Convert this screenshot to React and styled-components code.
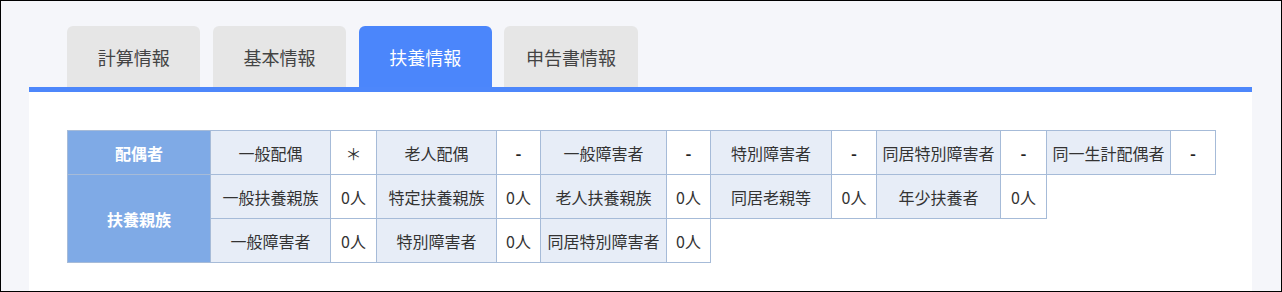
import styled, { createGlobalStyle } from "styled-components";

const GlobalStyle = createGlobalStyle`
	html, body {
		margin: 0;
		padding: 0;
	}
	body {
		font-family: "Noto Sans CJK JP", "Noto Sans", sans-serif;
		background: #f5f6fa;
	}
`;

const Frame = styled.div`
	box-sizing: border-box;
	width: 1282px;
	height: 292px;
	border: 1px solid #000;
	background: #f5f6fa;
	padding: 25px 29px 0 28px;
	display: flex;
	flex-direction: column;
`;

const TabBar = styled.div`
	display: flex;
	gap: 12.4px;
	padding-left: 38px;
`;

const Tab = styled.div`
	width: 133.4px;
	height: 61px;
	display: flex;
	align-items: center;
	justify-content: center;
	border-radius: 6px 6px 0 0;
	font-size: 18px;
	color: ${(p) => (p.$active ? "#ffffff" : "#444444")};
	background: ${(p) => (p.$active ? "#4b86fb" : "#e6e6e6")};
	cursor: pointer;
	user-select: none;
`;

const Panel = styled.div`
	flex: 1;
	background: #ffffff;
	border-top: 5px solid #4d87fb;
	padding: 38px 0 0 38px;
`;

const Table = styled.table`
	border-collapse: collapse;
	table-layout: fixed;
	width: 1148px;
	font-size: 16px;
`;

const HeadCell = styled.th`
	height: 43px;
	padding: 0;
	background: #7faae6;
	color: #ffffff;
	font-weight: 700;
	font-size: 16px;
	text-align: center;
	border: 1px solid #a6bbd8;
	border-top-color: ${(p) => (p.$lower ? "#c8daf3" : "#a6bbd8")};
`;

const LabelCell = styled.td`
	height: 43px;
	padding: 0;
	background: #e7edf7;
	color: #333333;
	text-align: center;
	white-space: nowrap;
	border: 1px solid #a6bbd8;
`;

const ValueCell = styled.td`
	height: 43px;
	padding: 0;
	background: #ffffff;
	color: ${(p) => (p.$empty ? "#222222" : "#333333")};
	font-weight: ${(p) => (p.$empty ? 700 : 400)};
	text-align: center;
	white-space: nowrap;
	border: 1px solid #a6bbd8;
`;

const tabs = ["計算情報", "基本情報", "扶養情報", "申告書情報"];
const colWidths = [143, 120, 46, 120, 44, 126, 44, 121, 45, 124, 46, 124, 45];

const spouse = [
	["一般配偶", "＊"],
	["老人配偶", "-"],
	["一般障害者", "-"],
	["特別障害者", "-"],
	["同居特別障害者", "-"],
	["同一生計配偶者", "-"],
];

const dependents = [
	["一般扶養親族", "0人"],
	["特定扶養親族", "0人"],
	["老人扶養親族", "0人"],
	["同居老親等", "0人"],
	["年少扶養者", "0人"],
];

const disabled = [
	["一般障害者", "0人"],
	["特別障害者", "0人"],
	["同居特別障害者", "0人"],
];

function Pairs({ items }) {
	return items.map(([label, value], i) => [
		<LabelCell key={`l${i}`}>{label}</LabelCell>,
		<ValueCell key={`v${i}`} $empty={value === "-"}>
			{value}
		</ValueCell>,
	]);
}

export default function App() {
	return (
		<>
			<GlobalStyle />
			<Frame>
				<TabBar>
					{tabs.map((t) => (
						<Tab key={t} $active={t === "扶養情報"}>
							{t}
						</Tab>
					))}
				</TabBar>
				<Panel>
					<Table>
						<colgroup>
							{colWidths.map((w, i) => (
								<col key={i} style={{ width: w }} />
							))}
						</colgroup>
						<tbody>
							<tr>
								<HeadCell>配偶者</HeadCell>
								<Pairs items={spouse} />
							</tr>
							<tr>
								<HeadCell $lower rowSpan={2}>
									扶養親族
								</HeadCell>
								<Pairs items={dependents} />
							</tr>
							<tr>
								<Pairs items={disabled} />
							</tr>
						</tbody>
					</Table>
				</Panel>
			</Frame>
		</>
	);
}
